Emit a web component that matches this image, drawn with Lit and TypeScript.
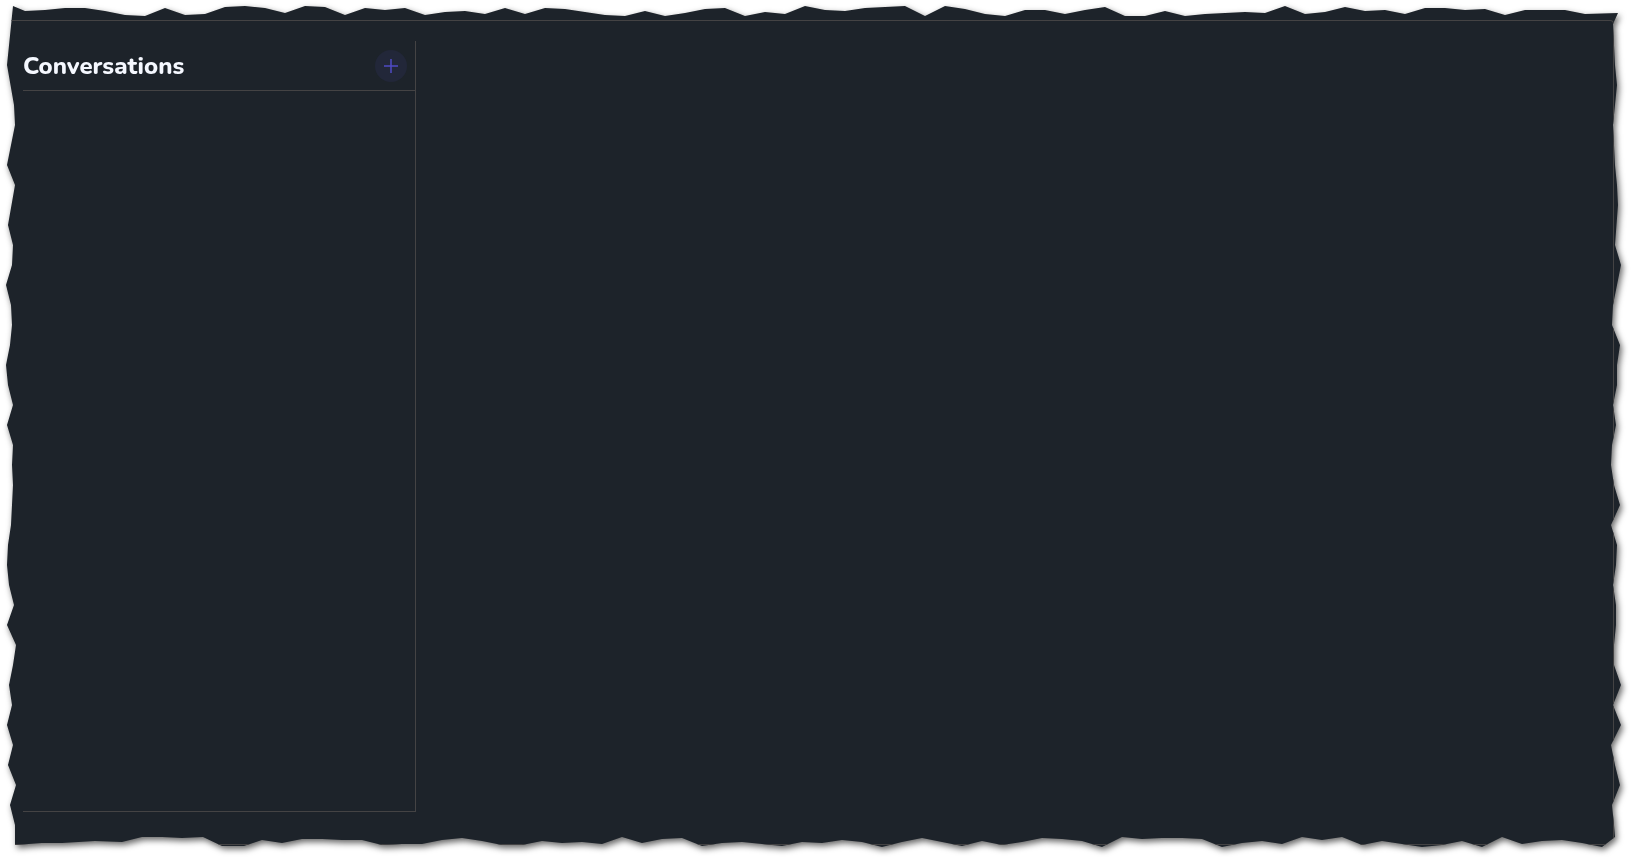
import { LitElement, html, css } from "lit";
import { customElement } from "lit/decorators.js";

// Outline of the torn sheet on a 1631 x 857 grid; scaled to the window as percentages.
const GRID_W = 1631;
const GRID_H = 857;

const TOP = [
  [13, 6], [25, 11], [45, 10], [65, 8], [85, 8], [105, 11], [125, 15], [145, 16], [165, 8], [185, 15],
  [205, 14], [225, 7], [245, 6], [265, 8], [285, 13], [305, 6], [325, 7], [345, 15], [365, 8], [385, 10],
  [405, 8], [425, 15], [445, 12], [465, 11], [485, 14], [505, 8], [525, 14], [545, 8], [565, 9], [585, 12],
  [605, 15], [625, 16], [645, 11], [665, 16], [685, 13], [705, 9], [725, 8], [745, 16], [765, 12], [785, 14],
  [805, 6], [825, 10], [845, 11], [865, 8], [885, 7], [905, 6], [925, 16], [945, 6], [965, 9], [985, 14],
  [1005, 16], [1025, 10], [1045, 10], [1065, 14], [1085, 10], [1105, 7], [1125, 16], [1145, 16], [1165, 11],
  [1185, 16], [1205, 14], [1225, 13], [1245, 12], [1265, 13], [1285, 6], [1305, 14], [1325, 12], [1345, 7],
  [1365, 11], [1385, 10], [1405, 14], [1425, 8], [1445, 8], [1465, 10], [1485, 9], [1505, 15], [1525, 10],
  [1545, 10], [1565, 10], [1585, 14], [1618, 13],
];

const RIGHT = [
  [1613, 24], [1614, 45], [1615, 65], [1617, 85], [1613, 125], [1615, 165], [1617, 185], [1618, 205],
  [1615, 245], [1621, 265], [1617, 285], [1613, 305], [1612, 325], [1620, 345], [1617, 365], [1617, 385],
  [1613, 405], [1616, 425], [1612, 445], [1611, 465], [1614, 485], [1620, 505], [1611, 525], [1617, 545],
  [1616, 565], [1613, 585], [1616, 605], [1616, 625], [1614, 645], [1614, 665], [1621, 685], [1613, 705],
  [1621, 725], [1611, 745], [1615, 765], [1620, 785], [1612, 805], [1614, 825], [1615, 837],
];

const BOTTOM = [
  [15, 845], [42, 843], [62, 843], [95, 841], [122, 842], [142, 837], [162, 837], [182, 838], [203, 837],
  [222, 846], [244, 846], [262, 840], [282, 843], [302, 839], [322, 839], [342, 840], [362, 840], [382, 845],
  [402, 844], [422, 844], [442, 840], [462, 838], [482, 841], [502, 845], [522, 845], [542, 841], [562, 843],
  [582, 842], [602, 844], [622, 837], [642, 843], [662, 839], [682, 838], [702, 846], [722, 843], [742, 842],
  [762, 844], [782, 846], [802, 842], [822, 843], [842, 840], [862, 842], [882, 847], [902, 842], [922, 838],
  [942, 842], [962, 846], [982, 841], [1002, 845], [1022, 842], [1042, 838], [1062, 839], [1082, 841],
  [1102, 847], [1122, 837], [1142, 839], [1162, 838], [1182, 838], [1202, 839], [1222, 847], [1242, 843],
  [1262, 841], [1282, 844], [1302, 837], [1322, 840], [1342, 837], [1362, 845], [1382, 841], [1402, 844],
  [1422, 847], [1442, 845], [1462, 841], [1482, 847], [1502, 837], [1522, 844], [1542, 841], [1562, 840],
  [1582, 843], [1602, 847],
];

const LEFT = [
  [7, 65], [14, 105], [15, 125], [7, 165], [15, 185], [8, 225], [13, 245], [12, 265], [6, 285], [11, 305],
  [12, 325], [10, 345], [6, 365], [8, 385], [13, 405], [7, 425], [13, 445], [12, 465], [13, 485], [11, 525],
  [8, 545], [7, 565], [9, 585], [14, 605], [7, 625], [16, 645], [13, 665], [9, 685], [12, 705], [7, 725],
  [13, 745], [8, 765], [16, 785], [10, 805], [15, 825],
];

const outline = [...TOP, ...RIGHT, ...[...BOTTOM].reverse(), ...[...LEFT].reverse()]
  .map(([x, y]) => `${((x / GRID_W) * 100).toFixed(3)}% ${((y / GRID_H) * 100).toFixed(3)}%`)
  .join(", ");

@customElement("conversation-list")
class ConversationList extends LitElement {
  static styles = css`
    :host {
      display: flex;
      flex-direction: column;
      box-sizing: border-box;
      border-right: 1px solid #444344;
      border-bottom: 1px solid #444344;
    }
    .header {
      display: flex;
      align-items: center;
      justify-content: space-between;
      padding: 9px 8px 8px 0;
      border-bottom: 1px solid #444344;
    }
    .title {
      margin: 0;
      font-family: Nunito, "Open Sans", "Noto Sans", sans-serif;
      font-size: 24px;
      line-height: 32px;
      font-weight: 800;
      color: #f5f8ff;
    }
    .add {
      display: flex;
      align-items: center;
      justify-content: center;
      width: 32px;
      height: 32px;
      padding: 0;
      border: 0;
      border-radius: 50%;
      background: #222739;
      color: #4f4bc4;
      cursor: pointer;
    }
    .icon {
      display: block;
      width: 16px;
      height: 16px;
    }
  `;

  render() {
    return html`
      <header class="header">
        <h2 class="title">Conversations</h2>
        <button class="add" type="button" aria-label="New conversation">
          <svg class="icon" viewBox="0 0 16 16" fill="currentColor" aria-hidden="true">
            <path d="M7.25 1h1.5v6.25H15v1.5H8.75V15h-1.5V8.75H1v-1.5h6.25z" />
          </svg>
        </button>
      </header>
    `;
  }
}

@customElement("app-root")
class AppRoot extends LitElement {
  static styles = css`
    :host {
      display: block;
      height: 100vh;
      background: #ffffff;
    }
    .shadow {
      height: 100%;
      filter: drop-shadow(2px 3px 3px rgba(0, 0, 0, 0.6));
    }
    .sheet {
      display: flex;
      box-sizing: border-box;
      height: 100%;
      padding: 20px 17px 12px 0;
      background: #1d232a;
    }
    .card {
      display: grid;
      grid-template-columns: 1fr 3fr;
      flex: 1;
      box-sizing: border-box;
      padding: 20px 18px 32px 23px;
      border: 1px solid #444344;
      border-left: 0;
      border-radius: 0 4px 4px 0;
    }
  `;

  render() {
    return html`
      <div class="shadow">
        <div class="sheet" style="clip-path: polygon(${outline})">
          <main class="card">
            <conversation-list></conversation-list>
            <section aria-label="Messages"></section>
          </main>
        </div>
      </div>
    `;
  }
}
